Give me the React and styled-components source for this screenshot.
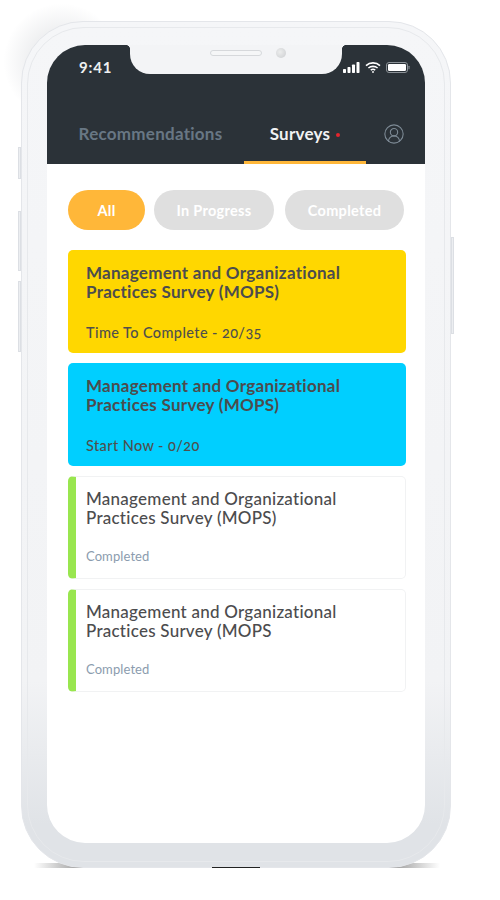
import React from "react"
import styled, { createGlobalStyle } from "styled-components"
import { CircleUserRound } from "lucide-react"

const GlobalStyle = createGlobalStyle`
  html, body {
    margin: 0;
    padding: 0;
    background: #fff;
    font-family: "Lato", "Open Sans", sans-serif;
    font-feature-settings: "onum";
  }
`

const Page = styled.div`
  width: 500px;
  height: 900px;
  padding: 21px 0 0 21px;
  box-sizing: border-box;
  overflow: hidden;
  isolation: isolate;
`

const Phone = styled.div`
  position: relative;
  width: 430px;
  height: 847px;
  box-sizing: border-box;
  padding: 23px 25px 24px 25px;
  border-radius: 62px;
  background: linear-gradient(180deg, #f5f6f8 0%, #f2f3f5 78%, #e0e3e7 95%);
  border: 1px solid #e4e6ea;

  &::before {
    content: "";
    position: absolute;
    inset: 5px;
    border-radius: 57px;
    border: 1px solid #e7e9ec;
    pointer-events: none;
  }

  &::after {
    content: "";
    position: absolute;
    left: 190px;
    bottom: -1px;
    width: 48px;
    height: 1px;
    background: #222;
  }
`

const CornerShade = styled.div`
  position: absolute;
  z-index: -1;
  left: -21px;
  top: -21px;
  width: 110px;
  height: 110px;
  background: radial-gradient(circle at 55% 55%, rgba(40, 50, 70, 0.09) 30%, rgba(40, 50, 70, 0) 68%);
`

const FloorShade = styled.div`
  position: absolute;
  z-index: -1;
  left: 12px;
  right: 10px;
  bottom: -1px;
  height: 5px;
  background: linear-gradient(90deg, transparent, #a8a8a8 10%, #666 28%, #666 72%, #a8a8a8 90%, transparent);
`

const SideButton = styled.span`
  position: absolute;
  top: ${p => p.$top}px;
  ${p => (p.$right ? "right: -4px" : "left: -4px")};
  width: 3px;
  height: ${p => p.$height}px;
  background: #eceef1;
  border: 1px solid #dcdfe4;
  box-sizing: border-box;
`

const Screen = styled.div`
  position: relative;
  height: 100%;
  border-radius: 38px;
  background: #fff;
  overflow: hidden;
`

const Header = styled.header`
  height: 119px;
  background: #2b3238;
  display: flex;
  flex-direction: column;
  justify-content: space-between;
`

const Notch = styled.div`
  position: absolute;
  top: 0;
  left: 83px;
  width: 212px;
  height: 29px;
  background: #f3f4f6;
  border-radius: 0 0 20px 20px;
  display: flex;
  align-items: center;
  justify-content: center;
  gap: 14px;
  padding: 0 0 13px 24px;
  box-sizing: border-box;

  &::before,
  &::after {
    content: "";
    position: absolute;
    top: 0;
    width: 5px;
    height: 5px;
  }

  &::before {
    left: -5px;
    background: radial-gradient(circle at 0 100%, transparent 5px, #f3f4f6 5.5px);
  }

  &::after {
    right: -5px;
    background: radial-gradient(circle at 100% 100%, transparent 5px, #f3f4f6 5.5px);
  }
`

const Speaker = styled.span`
  width: 52px;
  height: 6px;
  border-radius: 3px;
  background: #f5f6f7;
  border: 1px solid #d6d8db;
  box-sizing: border-box;
`

const Camera = styled.span`
  width: 10px;
  height: 10px;
  border-radius: 50%;
  background: radial-gradient(circle at 40% 40%, #eceded, #cbcdd0);
`

const StatusBar = styled.div`
  display: flex;
  align-items: center;
  justify-content: space-between;
  padding: 13px 15px 0 32px;
  color: #fff;
`

const Time = styled.span`
  font-size: 15px;
  font-weight: 700;
  letter-spacing: 0.8px;
  font-feature-settings: "lnum";
  color: #eef0f1;
`

const StatusIcons = styled.div`
  display: flex;
  align-items: center;
  gap: 5px;
`

const Tabs = styled.nav`
  display: flex;
  align-items: stretch;
  height: 60px;
  padding: 0 20px 0 31px;
`

const Tab = styled.div`
  display: flex;
  align-items: center;
  justify-content: center;
  gap: 6px;
  width: ${p => p.$width}px;
  margin-left: ${p => p.$offset || 0}px;
  box-sizing: border-box;
  padding-top: 1px;
  font-size: 17px;
  font-weight: 700;
  letter-spacing: 0.25px;
  white-space: nowrap;
  color: ${p => (p.$active ? "#f1f2f3" : "#687784")};
  border-bottom: 3px solid ${p => (p.$active ? "#ffb739" : "transparent")};
  border-radius: 3px 3px 0 0;
`

const Dot = styled.span`
  width: 4px;
  height: 4px;
  margin-top: 3px;
  border-radius: 50%;
  background: #e5252d;
`

const Profile = styled.div`
  margin-left: auto;
  display: flex;
  align-items: center;
  color: #7d8a95;
`

const Content = styled.main`
  padding: 26px 19px 0 21px;
`

const Filters = styled.div`
  display: flex;
  margin-bottom: 20px;
`

const Pill = styled.button`
  width: ${p => p.$width}px;
  height: 40px;
  margin-left: ${p => p.$gap || 0}px;
  border: 0;
  padding: 0;
  border-radius: 20px;
  background: ${p => (p.$active ? "#ffb739" : "#dfdfdf")};
  color: #fff;
  font-family: inherit;
  font-size: 14.5px;
  font-weight: 700;
  letter-spacing: 0.3px;
`

const CardList = styled.div`
  display: flex;
  flex-direction: column;
  gap: 10px;
`

const Card = styled.article`
  height: 103px;
  box-sizing: border-box;
  padding: ${p => (p.$done ? "12px 18px 0 10px" : "13px 18px 0 18px")};
  border-radius: 5px;
  background: ${p => p.$bg || "#fff"};
  border: ${p => (p.$done ? "1px solid #f1f2f3" : "0")};
  border-left: ${p => (p.$done ? "8px solid #99e64f" : "0")};
  display: flex;
  flex-direction: column;
`

const CardTitle = styled.h3`
  margin: 0;
  font-size: 17px;
  line-height: 19px;
  font-weight: ${p => (p.$done ? 500 : 700)};
  letter-spacing: ${p => (p.$done ? "0.25px" : "0.27px")};
  color: #4c4c4e;
`

const CardMeta = styled.p`
  margin: ${p => (p.$done ? "20px" : "23px")} 0 0;
  font-size: ${p => (p.$done ? "13px" : "14.5px")};
  line-height: 18px;
  font-weight: ${p => (p.$done ? 400 : 500)};
  letter-spacing: ${p => (p.$done ? "0.1px" : "0.4px")};
  color: ${p => (p.$done ? "#8b9cae" : "#4f4f4d")};
`

const SignalIcon = () => (
  <svg width="17" height="11" viewBox="0 0 17 11">
    <rect x="0" y="7" width="3" height="4" rx="0.7" fill="#fff" />
    <rect x="4.5" y="5" width="3" height="6" rx="0.7" fill="#fff" />
    <rect x="9" y="2.5" width="3" height="8.5" rx="0.7" fill="#fff" />
    <rect x="13.5" y="0" width="3" height="11" rx="0.7" fill="#fff" />
  </svg>
)

const WifiIcon = () => (
  <svg width="16" height="11" viewBox="0 0 16 11" fill="none" stroke="#fff" strokeWidth="1.6">
    <path d="M1 3.6C5 0 11 0 15 3.6" />
    <path d="M3.4 6C6 3.8 10 3.8 12.6 6" />
    <path d="M5.8 8.2C7 7.2 9 7.2 10.2 8.2" />
    <circle cx="8" cy="10" r="0.9" fill="#fff" stroke="none" />
  </svg>
)

const BatteryIcon = () => (
  <svg width="24" height="11" viewBox="0 0 24 11">
    <rect x="0.5" y="0.5" width="21" height="10" rx="2.5" fill="none" stroke="#8b9197" />
    <rect x="2" y="2" width="18" height="7" rx="1.2" fill="#fff" />
    <rect x="22.5" y="3.8" width="1" height="3.4" rx="0.5" fill="#8b9197" />
  </svg>
)

const surveys = [
  { id: 1, bg: "#ffd700", title: ["Management and Organizational", "Practices Survey (MOPS)"], meta: "Time To Complete - 20/35" },
  { id: 2, bg: "#00cfff", title: ["Management and Organizational", "Practices Survey (MOPS)"], meta: "Start Now - 0/20" },
  { id: 3, done: true, title: ["Management and Organizational", "Practices Survey (MOPS)"], meta: "Completed" },
  { id: 4, done: true, title: ["Management and Organizational", "Practices Survey (MOPS"], meta: "Completed" },
]

const App = () => {
  return (
    <Page>
      <GlobalStyle />
      <Phone>
        <CornerShade />
        <FloorShade />
        <SideButton $top={125} $height={32} />
        <SideButton $top={189} $height={60} />
        <SideButton $top={259} $height={71} />
        <SideButton $right $top={215} $height={97} />
        <Screen>
          <Notch>
            <Speaker />
            <Camera />
          </Notch>
          <Header>
            <StatusBar>
              <Time>9:41</Time>
              <StatusIcons>
                <SignalIcon />
                <WifiIcon />
                <BatteryIcon />
              </StatusIcons>
            </StatusBar>
            <Tabs>
              <Tab $width={145}>Recommendations</Tab>
              <Tab $width={122} $offset={21} $active>
                Surveys
                <Dot />
              </Tab>
              <Profile>
                <CircleUserRound size={22} strokeWidth={1.2} />
              </Profile>
            </Tabs>
          </Header>
          <Content>
            <Filters>
              <Pill $active $width={77}>All</Pill>
              <Pill $width={120} $gap={9}>In Progress</Pill>
              <Pill $width={119} $gap={11}>Completed</Pill>
            </Filters>
            <CardList>
              {surveys.map(s => (
                <Card key={s.id} $bg={s.bg} $done={s.done}>
                  <CardTitle $done={s.done}>
                    {s.title[0]}
                    <br />
                    {s.title[1]}
                  </CardTitle>
                  <CardMeta $done={s.done}>{s.meta}</CardMeta>
                </Card>
              ))}
            </CardList>
          </Content>
        </Screen>
      </Phone>
    </Page>
  )
}

export default App
